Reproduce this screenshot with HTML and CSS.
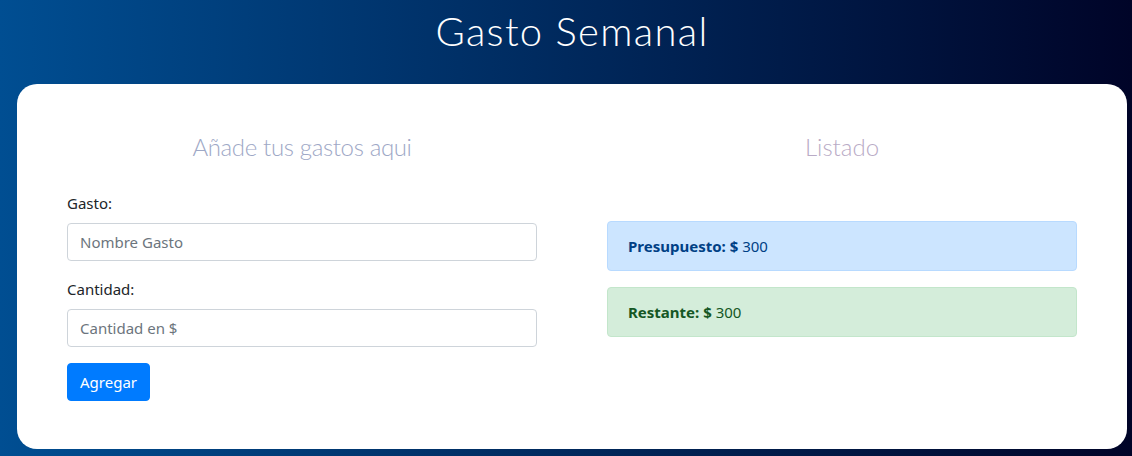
FILE: index.html
```html
<!DOCTYPE html>
<html lang="es">
<head>
<meta charset="utf-8">
<title>Gasto Semanal</title>
<link rel="stylesheet" href="styles.css">
</head>
<body>
<header class="header">
  <h1 class="title">Gasto Semanal</h1>
</header>
<main class="card">
  <section class="col col-form">
    <h2 class="subtitle subtitle-form">Añade tus gastos aqui</h2>
    <form class="form">
      <div class="field">
        <label class="label" for="gasto">Gasto:</label>
        <input class="input" id="gasto" type="text" placeholder="Nombre Gasto">
      </div>
      <div class="field">
        <label class="label" for="cantidad">Cantidad:</label>
        <input class="input" id="cantidad" type="text" placeholder="Cantidad en $">
      </div>
      <button class="btn" type="button">Agregar</button>
    </form>
  </section>
  <section class="col col-list">
    <h2 class="subtitle subtitle-list">Listado</h2>
    <div class="alert alert-primary"><strong>Presupuesto: $</strong> 300</div>
    <div class="alert alert-success"><strong>Restante: $</strong> 300</div>
  </section>
</main>
</body>
</html>
```
FILE: styles.css
```css
* { box-sizing: border-box; }
html, body { height: 100%; }
body {
  margin: 0;
  font-family: "Noto Sans", "Open Sans", sans-serif;
  font-size: 15px;
  line-height: 1.5;
  color: #212529;
  background: linear-gradient(to left, #000428, #004e92);
  overflow: hidden;
}
.header {
  padding-top: 7px;
  text-align: center;
}
.title {
  margin: 0 0 0 17px;
  width: 1110px;
  font-family: "Lato", sans-serif;
  font-weight: 300;
  font-size: 40px;
  line-height: 48px;
  letter-spacing: 1.3px;
  color: #ffffff;
}
.card {
  margin: 29px 0 0 17px;
  width: 1110px;
  height: 365px;
  background: #ffffff;
  border-radius: 20px;
  padding: 48px 50px;
  display: grid;
  grid-template-columns: 470px 470px;
  column-gap: 70px;
}
.subtitle {
  margin: 0;
  font-family: "Lato", sans-serif;
  font-weight: 300;
  font-size: 24px;
  line-height: 29px;
  color: #9ea8c6;
  text-align: center;
}
.subtitle-form { margin-bottom: 30px; letter-spacing: -0.35px; }
.subtitle-list { margin-bottom: 60px; color: #b9abc6; }
.field { margin-bottom: 16px; }
.label {
  display: block;
  margin-bottom: 8px;
  line-height: 24px;
}
.input {
  display: block;
  width: 100%;
  height: 38px;
  padding: 6px 12px;
  font: inherit;
  color: #495057;
  background: #fff;
  border: 1px solid #ced4da;
  border-radius: 4px;
}
.input::placeholder { color: #6c757d; opacity: 1; }
.btn {
  display: inline-block;
  height: 38px;
  padding: 6px 12px;
  font: inherit;
  color: #fff;
  background: #007bff;
  border: 1px solid #007bff;
  border-radius: 4px;
}
.alert {
  padding: 12px 20px;
  line-height: 24px;
  border: 1px solid transparent;
  border-radius: 4px;
  margin-bottom: 16px;
}
.alert strong { font-weight: 700; }
.alert-primary { color: #004085; background: #cce5ff; border-color: #b8daff; }
.alert-success { color: #155724; background: #d4edda; border-color: #c3e6cb; }
```
